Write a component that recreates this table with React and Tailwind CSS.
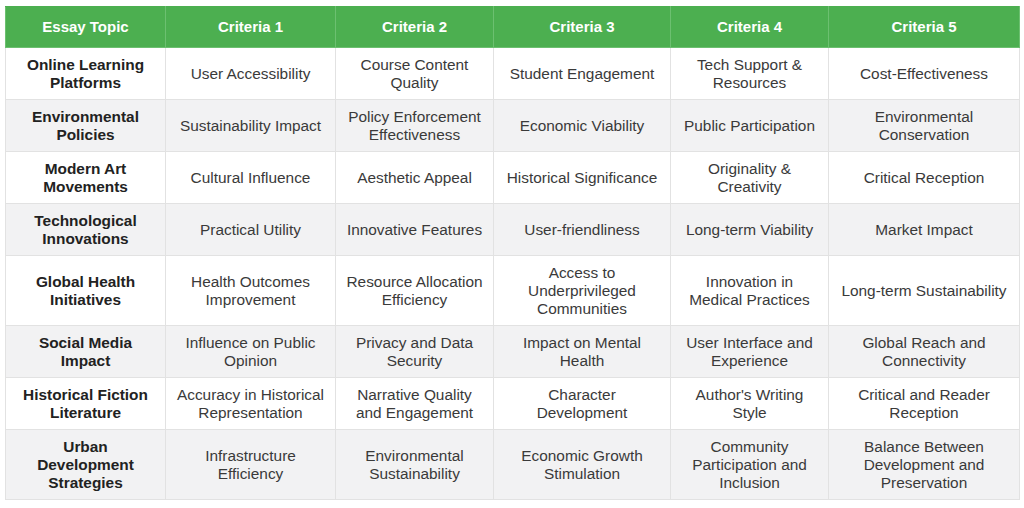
import React from "react";

const rows = [
  ["Online Learning Platforms", "User Accessibility", "Course Content Quality", "Student Engagement", "Tech Support & Resources", "Cost-Effectiveness"],
  ["Environmental Policies", "Sustainability Impact", "Policy Enforcement Effectiveness", "Economic Viability", "Public Participation", "Environmental Conservation"],
  ["Modern Art Movements", "Cultural Influence", "Aesthetic Appeal", "Historical Significance", "Originality & Creativity", "Critical Reception"],
  ["Technological Innovations", "Practical Utility", "Innovative Features", "User-friendliness", "Long-term Viability", "Market Impact"],
  ["Global Health Initiatives", "Health Outcomes Improvement", "Resource Allocation Efficiency", "Access to Underprivileged Communities", "Innovation in Medical Practices", "Long-term Sustainability"],
  ["Social Media Impact", "Influence on Public Opinion", "Privacy and Data Security", "Impact on Mental Health", "User Interface and Experience", "Global Reach and Connectivity"],
  ["Historical Fiction Literature", "Accuracy in Historical Representation", "Narrative Quality and Engagement", "Character Development", "Author's Writing Style", "Critical and Reader Reception"],
  ["Urban Development Strategies", "Infrastructure Efficiency", "Environmental Sustainability", "Economic Growth Stimulation", "Community Participation and Inclusion", "Balance Between Development and Preservation"],
];

const headers = ["Essay Topic", "Criteria 1", "Criteria 2", "Criteria 3", "Criteria 4", "Criteria 5"];
const widths = ["w-[160px]", "w-[170px]", "w-[158px]", "w-[177px]", "w-[158px]", "w-[191px]"];

export default function App() {
  return (
    <div className="w-[1024px] h-[508px] bg-white pl-[5px] pt-[6px]" style={{ fontFamily: '"Liberation Sans", Arial, sans-serif' }}>
      <table className="w-[1014px] table-fixed border-collapse leading-[18px]">
        <colgroup>
          {widths.map((w, i) => (
            <col key={i} className={w} />
          ))}
        </colgroup>
        <thead>
          <tr className="bg-[#4caf50]">
            {headers.map((h) => (
              <th key={h} className="border border-[#6cc070] border-t-[#4caf50] py-[11px] px-2 text-center text-[15px] font-bold text-white">
                {h}
              </th>
            ))}
          </tr>
        </thead>
        <tbody>
          {rows.map((r, i) => (
            <tr key={i} className={i % 2 === 1 ? "bg-[#f2f2f3]" : "bg-white"}>
              {r.map((c, j) => (
                <td
                  key={j}
                  className={
                    "border border-[#e2e2e2] pt-2 pb-[7px] px-[8px] text-center align-middle text-[15.4px] " +
                    (j === 0 ? "font-bold text-[#222]" : "text-[#3a3a3a]")
                  }
                >
                  {c}
                </td>
              ))}
            </tr>
          ))}
        </tbody>
      </table>
    </div>
  );
}
